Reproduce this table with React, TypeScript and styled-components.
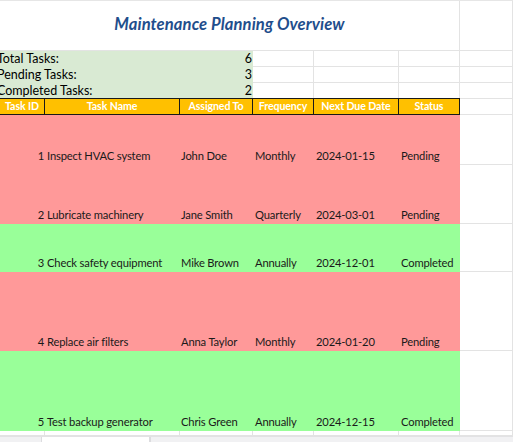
import React from "react";
import styled, { createGlobalStyle } from "styled-components";

const GlobalStyle = createGlobalStyle`
  html, body { margin: 0; padding: 0; background: #ffffff; }
  body { font-family: Lato, "Liberation Sans", Arial, sans-serif; overflow: hidden; }
  * { box-sizing: border-box; }
`;

const COLS = "45px 135px 73px 61px 85px 61px 53px";
const GRID = "#e3e3e3";

const Sheet = styled.div`
  width: 513px;
  height: 442px;
  display: flex;
  flex-direction: column;
  border-top: 1px solid #e6e6e6;
  overflow: hidden;
`;

const Row = styled.div<{ $h: number }>`
  display: grid;
  grid-template-columns: ${COLS};
  height: ${(p) => p.$h}px;
  flex: none;
  position: relative;
`;

const Cell = styled.div<{ $span?: number; $fill?: string; $align?: "left" | "right" | "center" }>`
  grid-column: span ${(p) => p.$span ?? 1};
  background: ${(p) => p.$fill ?? "#ffffff"};
  border-right: ${(p) => (p.$fill ? "none" : `1px solid ${GRID}`)};
  border-bottom: ${(p) => (p.$fill ? "none" : `1px solid ${GRID}`)};
  display: flex;
  align-items: flex-end;
  justify-content: ${(p) => (p.$align === "right" ? "flex-end" : p.$align === "center" ? "center" : "flex-start")};
  padding: 0 2px 1px 2px;
  font-size: 11.2px;
  letter-spacing: -0.15px;
  line-height: 16px;
  color: #1a1a1a;
  white-space: nowrap;
  overflow: visible;
`;

const TitleCell = styled(Cell)`
  align-items: center;
  justify-content: center;
  padding: 0 0 3px 0;
  font-size: 16.6px;
  font-weight: 700;
  font-style: italic;
  color: #1f4e8c;
  letter-spacing: 0.1px;
`;

const SummaryCell = styled(Cell)`
  justify-content: space-between;
  align-items: center;
  padding: 0 1px 0 0;
  font-size: 12.5px;
  letter-spacing: 0;
  color: #000;
  overflow: hidden;
`;

const SummaryLabel = styled.span`
  margin-left: -3px;
`;

const HeadCell = styled.div`
  background: #ffc000;
  border-right: 1px solid #1a1a1a;
  border-bottom: 1px solid #1a1a1a;
  box-shadow: 0 -1px 0 #1a1a1a;
  display: flex;
  align-items: center;
  justify-content: center;
  font-size: 10.6px;
  letter-spacing: -0.1px;
  font-weight: 700;
  color: #ffffff;
  white-space: nowrap;
  line-height: 15px;
`;

const GapCell = styled.div`
  border-right: 1px solid ${GRID};
  border-bottom: 1px solid ${GRID};
`;

const TabBar = styled.div`
  flex: 1;
  background: #f1f1f3;
  border-top: 1px solid #e2e2e4;
  display: flex;
`;

const Tab = styled.div<{ $w: number; $active?: boolean }>`
  width: ${(p) => p.$w}px;
  background: ${(p) => (p.$active ? "#ffffff" : "transparent")};
  border-right: 1px solid #dcdcdf;
`;

type Task = {
  id: number;
  name: string;
  who: string;
  freq: string;
  due: string;
  status: "Pending" | "Completed";
  h: number;
};

const tasks: Task[] = [
  { id: 1, name: "Inspect HVAC system", who: "John Doe", freq: "Monthly", due: "2024-01-15", status: "Pending", h: 50 },
  { id: 2, name: "Lubricate machinery", who: "Jane Smith", freq: "Quarterly", due: "2024-03-01", status: "Pending", h: 59 },
  { id: 3, name: "Check safety equipment", who: "Mike Brown", freq: "Annually", due: "2024-12-01", status: "Completed", h: 48 },
  { id: 4, name: "Replace air filters", who: "Anna Taylor", freq: "Monthly", due: "2024-01-20", status: "Pending", h: 79 },
  { id: 5, name: "Test backup generator", who: "Chris Green", freq: "Annually", due: "2024-12-15", status: "Completed", h: 80 },
];

const summary = [
  { label: "Total Tasks:", value: 6 },
  { label: "Pending Tasks:", value: 3 },
  { label: "Completed Tasks:", value: 2 },
];

const headers = ["Task ID", "Task Name", "Assigned To", "Frequency", "Next Due Date", "Status"];

const RED = "#ff9999";
const GREEN = "#99ff99";
const SUMMARY = "#d9ead3";

export default function App() {
  return (
    <>
      <GlobalStyle />
      <Sheet>
        <Row $h={50}>
          <TitleCell $span={6}>Maintenance Planning Overview</TitleCell>
          <Cell />
        </Row>
        {summary.map((s) => (
          <Row $h={16} key={s.label}>
            <SummaryCell $span={3} $fill={SUMMARY}>
              <SummaryLabel>{s.label}</SummaryLabel>
              <span>{s.value}</span>
            </SummaryCell>
            <Cell />
            <Cell />
            <Cell />
            <Cell />
          </Row>
        ))}
        <Row $h={16}>
          {headers.map((h) => (
            <HeadCell key={h}>{h}</HeadCell>
          ))}
          <Cell />
        </Row>
        {tasks.map((t) => {
          const fill = t.status === "Pending" ? RED : GREEN;
          return (
            <Row $h={t.h} key={t.id}>
              <Cell $fill={fill} $align="right" style={{ paddingRight: 1 }}>{t.id}</Cell>
              <Cell $fill={fill}>{t.name}</Cell>
              <Cell $fill={fill} style={{ paddingLeft: 1 }}>{t.who}</Cell>
              <Cell $fill={fill}>{t.freq}</Cell>
              <Cell $fill={fill}>{t.due}</Cell>
              <Cell $fill={fill}>{t.status}</Cell>
              <Cell />
            </Row>
          );
        })}
        <Row $h={5}>
          {Array.from({ length: 7 }).map((_, i) => (
            <GapCell key={i} />
          ))}
        </Row>
        <TabBar>
          <Tab $w={42} />
          <Tab $w={108} $active />
          <Tab $w={0} />
        </TabBar>
      </Sheet>
    </>
  );
}
